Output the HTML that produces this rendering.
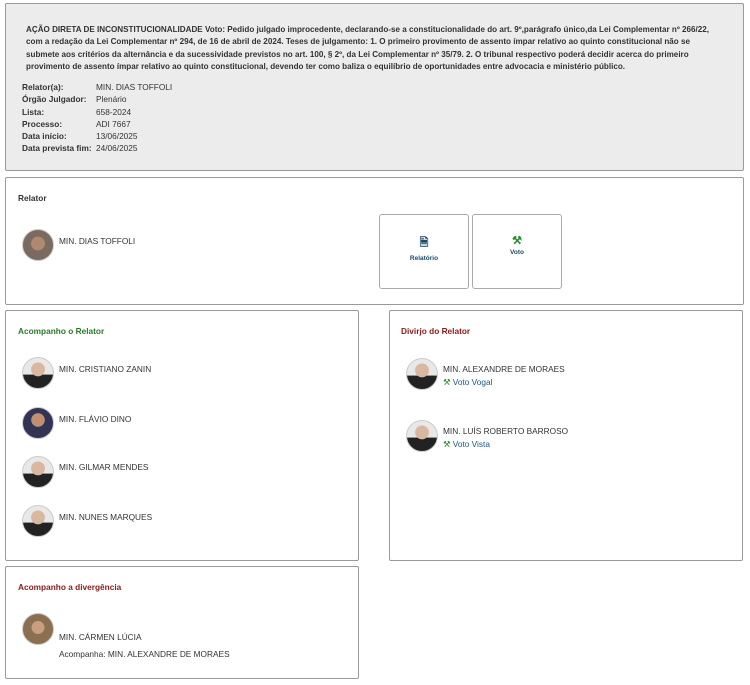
<!DOCTYPE html><html><head><meta charset="utf-8"><style>
body{margin:0;width:750px;height:685px;background:#fff;font-family:"Liberation Sans",sans-serif;color:#333;position:relative;overflow:hidden}
.a{position:absolute}
.box{position:absolute;border:1px solid #9a9a9a;border-radius:2px;background:#fff}
.t{font-size:8.3px;white-space:nowrap}
.b{font-weight:bold}
.av{position:absolute;width:30px;height:30px;border-radius:50%;border:1px solid #ccc;background:radial-gradient(circle at 50% 38%,#d9b8a0 0 28%,transparent 30%),linear-gradient(#e8e8e8 55%,#222 56%);}
.btn{position:absolute;border:1px solid #aaa;border-radius:3px;background:#fff;text-align:center;font-size:6.5px;font-weight:bold;color:#1a4a6a}
</style></head><body>
<div class="box" style="left:5px;top:3px;width:737px;height:166px;background:#ececec"></div>
<div class="a t b" style="left:26px;top:24px;line-height:12.4px;color:#333;font-size:8.1px">AÇÃO DIRETA DE INCONSTITUCIONALIDADE Voto: Pedido julgado improcedente, declarando-se a constitucionalidade do art. 9º,parágrafo único,da Lei Complementar nº 266/22,<br>com a redação da Lei Complementar nº 294, de 16 de abril de 2024. Teses de julgamento: 1. O primeiro provimento de assento ímpar relativo ao quinto constitucional não se<br>submete aos critérios da alternância e da sucessividade previstos no art. 100, § 2º, da Lei Complementar nº 35/79. 2. O tribunal respectivo poderá decidir acerca do primeiro<br>provimento de assento ímpar relativo ao quinto constitucional, devendo ter como baliza o equilíbrio de oportunidades entre advocacia e ministério público.</div>
<div class="a t" style="left:22px;top:81px;line-height:12.3px"><b>Relator(a):</b><br><b>Órgão Julgador:</b><br><b>Lista:</b><br><b>Processo:</b><br><b>Data início:</b><br><b>Data prevista fim:</b></div>
<div class="a t" style="left:96px;top:81px;line-height:12.3px">MIN. DIAS TOFFOLI<br>Plenário<br>658-2024<br>ADI 7667<br>13/06/2025<br>24/06/2025</div>

<div class="box" style="left:5px;top:177px;width:737px;height:126px"></div>
<div class="a t b" style="left:18px;top:193px">Relator</div>
<div class="av" style="left:22px;top:229px;background:radial-gradient(circle at 50% 45%,#b08a70 0 30%,#7a6a60 32%)"></div>
<div class="a t" style="left:59px;top:236px">MIN. DIAS TOFFOLI</div>
<div class="btn" style="left:379px;top:214px;width:88px;height:73px"><div style="margin-top:19px;font-size:11px;color:#1a4a6a">&#128462;</div><div style="margin-top:2px">Relatório</div></div>
<div class="btn" style="left:472px;top:214px;width:88px;height:73px"><div style="margin-top:19px;font-size:11px;color:#2a8a2a;font-weight:bold">&#x2692;</div><div style="margin-top:2px">Voto</div></div>

<div class="box" style="left:5px;top:310px;width:352px;height:249px"></div>
<div class="a t b" style="left:18px;top:326px;color:#2a7a2a">Acompanho o Relator</div>
<div class="av" style="left:22px;top:357px"></div><div class="a t" style="left:59px;top:364px">MIN. CRISTIANO ZANIN</div>
<div class="av" style="left:22px;top:407px;background:radial-gradient(circle at 50% 40%,#c09070 0 28%,#335 30%)"></div><div class="a t" style="left:59px;top:414px">MIN. FLÁVIO DINO</div>
<div class="av" style="left:22px;top:456px"></div><div class="a t" style="left:59px;top:462px">MIN. GILMAR MENDES</div>
<div class="av" style="left:22px;top:505px"></div><div class="a t" style="left:59px;top:512px">MIN. NUNES MARQUES</div>

<div class="box" style="left:389px;top:310px;width:352px;height:249px"></div>
<div class="a t b" style="left:401px;top:326px;color:#8b1a1a">Divirjo do Relator</div>
<div class="av" style="left:406px;top:358px"></div><div class="a t" style="left:443px;top:364px">MIN. ALEXANDRE DE MORAES</div>
<div class="a t" style="left:443px;top:377px;color:#1a5a8a"><span style="color:#2a8a2a">&#x2692;</span> Voto Vogal</div>
<div class="av" style="left:406px;top:420px"></div><div class="a t" style="left:443px;top:426px">MIN. LUÍS ROBERTO BARROSO</div>
<div class="a t" style="left:443px;top:439px;color:#1a5a8a"><span style="color:#2a8a2a">&#x2692;</span> Voto Vista</div>

<div class="box" style="left:5px;top:566px;width:352px;height:111px"></div>
<div class="a t b" style="left:18px;top:582px;color:#8b1a1a">Acompanho a divergência</div>
<div class="av" style="left:22px;top:613px;background:radial-gradient(circle at 50% 45%,#c8a080 0 28%,#8a7050 30%)"></div>
<div class="a t" style="left:59px;top:632px">MIN. CÁRMEN LÚCIA</div>
<div class="a t" style="left:59px;top:649px">Acompanha: MIN. ALEXANDRE DE MORAES</div>
</body></html>
